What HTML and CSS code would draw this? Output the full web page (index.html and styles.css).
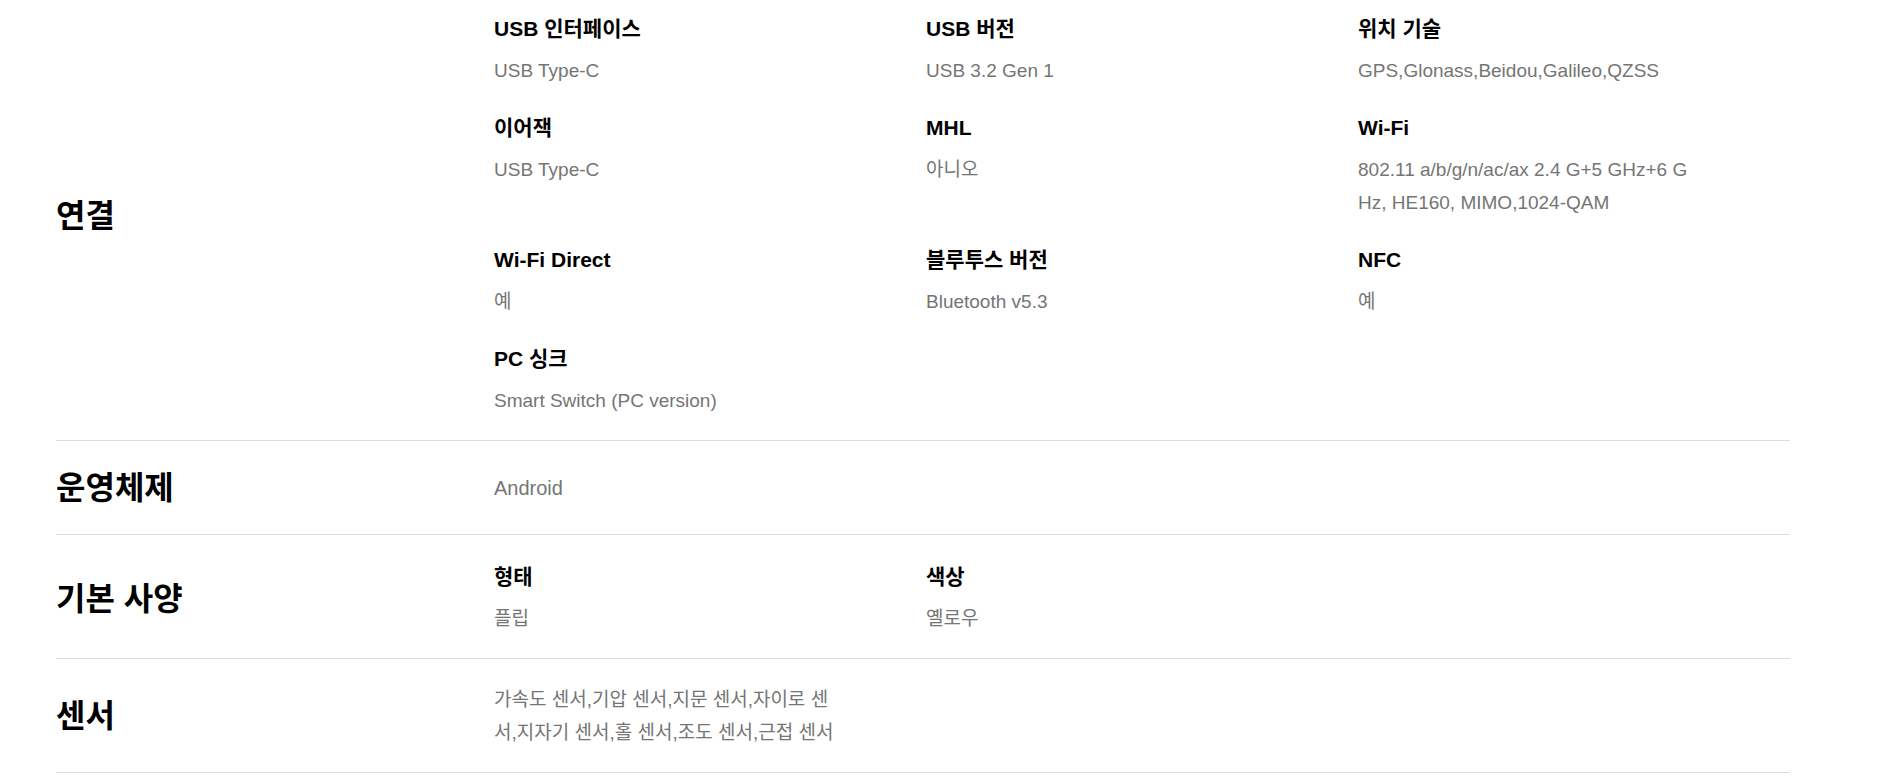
FILE: index.html
```html
<!DOCTYPE html>
<html lang="ko">
<head>
<meta charset="utf-8">
<title>사양</title>
<link rel="stylesheet" href="styles.css">
</head>
<body>
<div class="specs">
  <section class="spec-section">
    <h3 class="spec-heading">연결</h3>
    <div class="spec-grid">
      <div class="spec-item"><p class="spec-title">USB 인터페이스</p><p class="spec-value">USB Type-C</p></div>
      <div class="spec-item"><p class="spec-title">USB 버전</p><p class="spec-value">USB 3.2 Gen 1</p></div>
      <div class="spec-item"><p class="spec-title">위치 기술</p><p class="spec-value">GPS,Glonass,Beidou,Galileo,QZSS</p></div>
      <div class="spec-item"><p class="spec-title">이어잭</p><p class="spec-value">USB Type-C</p></div>
      <div class="spec-item"><p class="spec-title">MHL</p><p class="spec-value">아니오</p></div>
      <div class="spec-item"><p class="spec-title">Wi-Fi</p><p class="spec-value">802.11 a/b/g/n/ac/ax 2.4 G+5 GHz+6 GHz, HE160, MIMO,1024-QAM</p></div>
      <div class="spec-item"><p class="spec-title">Wi-Fi Direct</p><p class="spec-value">예</p></div>
      <div class="spec-item"><p class="spec-title">블루투스 버전</p><p class="spec-value">Bluetooth v5.3</p></div>
      <div class="spec-item"><p class="spec-title">NFC</p><p class="spec-value">예</p></div>
      <div class="spec-item"><p class="spec-title">PC 싱크</p><p class="spec-value">Smart Switch (PC version)</p></div>
    </div>
  </section>
  <section class="spec-section spec-section--single">
    <h3 class="spec-heading">운영체제</h3>
    <div class="spec-single">
      <p class="spec-value spec-value--large">Android</p>
    </div>
  </section>
  <section class="spec-section">
    <h3 class="spec-heading">기본 사양</h3>
    <div class="spec-grid">
      <div class="spec-item"><p class="spec-title">형태</p><p class="spec-value">플립</p></div>
      <div class="spec-item"><p class="spec-title">색상</p><p class="spec-value">옐로우</p></div>
    </div>
  </section>
  <section class="spec-section spec-section--single">
    <h3 class="spec-heading">센서</h3>
    <div class="spec-single">
      <p class="spec-value">가속도 센서,기압 센서,지문 센서,자이로 센서,지자기 센서,홀 센서,조도 센서,근접 센서</p>
    </div>
  </section>
</div>
</body>
</html>
```

FILE: styles.css
```css
html, body {
  margin: 0;
  padding: 0;
  background: #ffffff;
}

body {
  font-family: "Liberation Sans", "Noto Sans CJK KR", sans-serif;
  color: #000000;
  overflow: hidden;
}

.specs {
  width: 1734px;
  margin: -14px 0 0 56px;
  border-top: 1px solid #dddddd;
}

.spec-section {
  display: flex;
  align-items: center;
  padding: 28px 0 23px;
  border-bottom: 1px solid #dddddd;
}

.spec-section--single {
  padding: 24px 0 23px;
}

.spec-heading {
  flex: 0 0 438px;
  margin: 0;
  font-size: 32px;
  line-height: 40px;
  font-weight: 700;
  letter-spacing: 0;
  color: #000000;
}

.spec-grid {
  flex: 1;
  display: grid;
  grid-template-columns: repeat(3, 432px);
  row-gap: 27px;
}

.spec-item {
  min-width: 0;
}

.spec-title {
  margin: 0;
  font-size: 21px;
  line-height: 28px;
  font-weight: 700;
  color: #000000;
}

.spec-value {
  margin: 11px 0 0;
  max-width: 340px;
  font-size: 19px;
  line-height: 33px;
  color: #757575;
  word-break: break-all;
}

.spec-single {
  flex: 1;
  display: flex;
  align-items: center;
  min-height: 46px;
}

.spec-single .spec-value {
  margin: 0;
}

.spec-value--large {
  font-size: 20px;
}
```
